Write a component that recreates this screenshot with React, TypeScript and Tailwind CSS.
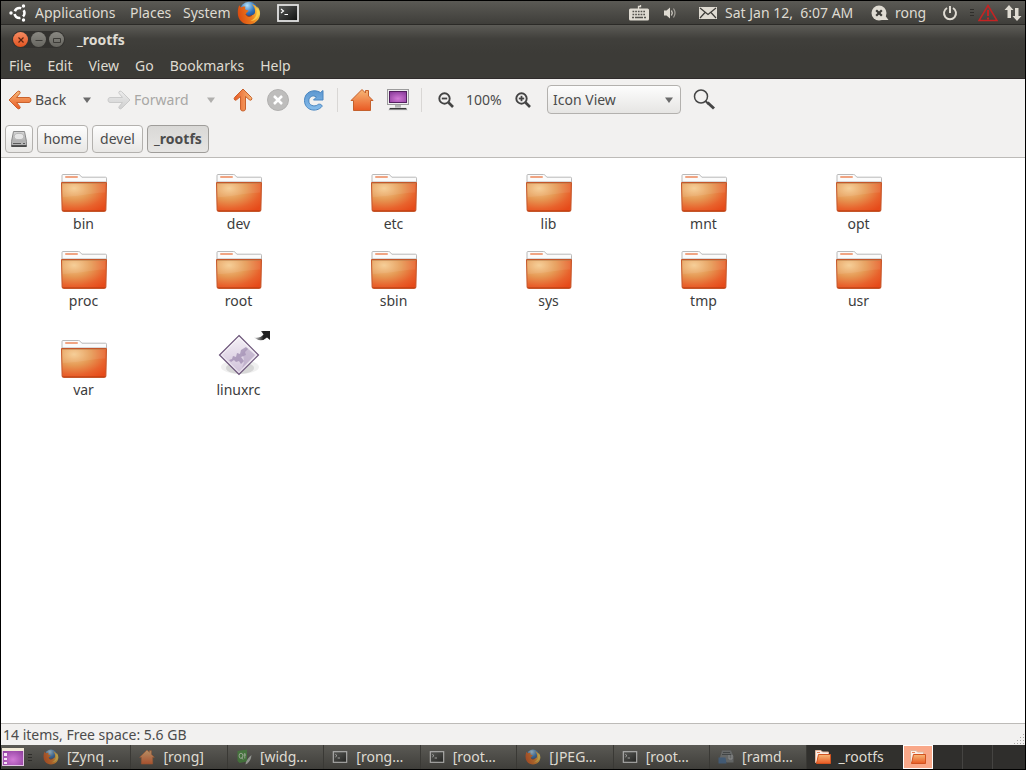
import type { ReactNode } from "react";
import clsx from "clsx";

const FOLDERS = ["bin", "dev", "etc", "lib", "mnt", "opt", "proc", "root", "sbin", "sys", "tmp", "usr", "var"];

const MENUS = ["File", "Edit", "View", "Go", "Bookmarks", "Help"];

const TASKS: { title: string; icon: ReactNode; active?: boolean }[] = [
  { title: "[Zynq …", icon: <FirefoxIcon className="size-4" /> },
  { title: "[rong]", icon: <HomeIcon className="size-4" /> },
  { title: "[widg…", icon: <QtIcon /> },
  { title: "[rong…", icon: <TerminalIcon className="h-3 w-4" /> },
  { title: "[root…", icon: <TerminalIcon className="h-3 w-4" /> },
  { title: "[JPEG…", icon: <FirefoxIcon className="size-4" /> },
  { title: "[root…", icon: <TerminalIcon className="h-3 w-4" /> },
  { title: "[ramd…", icon: <ArchiveIcon /> },
  { title: "_rootfs", icon: <SmallFolderIcon />, active: true },
];

// Gradients shared by every icon on the page
function IconDefs() {
  return (
    <svg className="absolute size-0" aria-hidden="true">
      <defs>
        <radialGradient id="folder" cx="0.28" cy="0.2" r="0.95">
          <stop offset="0" stopColor="#f5cb90" />
          <stop offset="0.4" stopColor="#e69a55" />
          <stop offset="0.75" stopColor="#e8622c" />
          <stop offset="1" stopColor="#e64a19" />
        </radialGradient>
        <linearGradient id="orange" x1="0" y1="0" x2="0" y2="1">
          <stop offset="0" stopColor="#f7b877" />
          <stop offset="1" stopColor="#e95a24" />
        </linearGradient>
        <linearGradient id="gray" x1="0" y1="0" x2="0" y2="1">
          <stop offset="0" stopColor="#ececec" />
          <stop offset="1" stopColor="#cfcfcf" />
        </linearGradient>
        <linearGradient id="blue" x1="0" y1="0" x2="0" y2="1">
          <stop offset="0" stopColor="#5d97d0" />
          <stop offset="1" stopColor="#86bdec" />
        </linearGradient>
        <radialGradient id="purple" cx="0.5" cy="0.65" r="0.7">
          <stop offset="0" stopColor="#d27ad6" />
          <stop offset="1" stopColor="#8c3d9c" />
        </radialGradient>
        <radialGradient id="globe" cx="0.4" cy="0.2" r="0.8">
          <stop offset="0" stopColor="#b4e0f8" />
          <stop offset="0.5" stopColor="#2f74bd" />
          <stop offset="1" stopColor="#12306b" />
        </radialGradient>
        <linearGradient id="fox" x1="0" y1="0.6" x2="1" y2="0.4">
          <stop offset="0" stopColor="#d9480f" />
          <stop offset="0.6" stopColor="#ec7d1d" />
          <stop offset="1" stopColor="#f9cf45" />
        </linearGradient>
        <linearGradient id="screen" x1="0" y1="0" x2="1" y2="1">
          <stop offset="0" stopColor="#5c5e5c" />
          <stop offset="1" stopColor="#0c0d0c" />
        </linearGradient>
        <linearGradient id="diamond" x1="0" y1="0" x2="0" y2="1">
          <stop offset="0" stopColor="#f5f1f7" />
          <stop offset="1" stopColor="#cfc0d8" />
        </linearGradient>
        <linearGradient id="emblem" x1="0" y1="0" x2="1" y2="0">
          <stop offset="0" stopColor="#dddddd" />
          <stop offset="0.6" stopColor="#222222" />
        </linearGradient>
        <linearGradient id="drive" x1="0" y1="0" x2="0" y2="1">
          <stop offset="0" stopColor="#d6d6d6" />
          <stop offset="1" stopColor="#9a9a9a" />
        </linearGradient>
      </defs>
    </svg>
  );
}

function UbuntuIcon() {
  return (
    <svg viewBox="0 0 18 18" className="size-[18px]" fill="none" aria-hidden="true">
      <circle cx="10.500" cy="9" r="5" stroke="#fff" strokeWidth="2.600" strokeDasharray="7.600 2.870" strokeDashoffset="3.800" />
      <circle cx="2" cy="9" r="1.700" fill="#fff" />
      <circle cx="14.500" cy="2" r="1.700" fill="#fff" />
      <circle cx="14.500" cy="16" r="1.700" fill="#fff" />
    </svg>
  );
}

function FirefoxIcon({ className }: { className: string }) {
  return (
    <svg viewBox="0 0 24 24" className={className} aria-hidden="true">
      <circle cx="12" cy="10" r="9.300" fill="url(#globe)" />
      <path
        d="M2.300 4.300 4 6.500C5.500 5.300 7 5.200 8.600 5.800 7.800 7 8 8 8.600 8.700l3 .8c-.4 1.700-2.400 1.800-2.800 3.600.8 2.500 4 3 6.200 1.200 1.800-.6 3-1.700 3-3.400.4-3-1-5.500-3-8 3.500 1.100 5.500 3.600 6.200 6 .2-.9 0-1.700-.3-2.700 1.700 2.200 2.400 4.700 2.100 7.400C22.500 19.200 17.800 23.300 12 23.300 5.500 23.300.8 18.400.8 12c0-2.800.3-5.200 1.500-7.700Z"
        fill="url(#fox)"
      />
      <path d="M18 6c3 4 2.500 11-4.500 14 7.500-.5 11-8 7-14.500L20 8Z" fill="#fbd650" opacity="0.800" />
      <path d="M8.800 13.100c.8 2.500 4 3 6.200 1.200" fill="none" stroke="#a5320c" strokeWidth="0.800" />
    </svg>
  );
}

function TerminalIcon({ className }: { className: string }) {
  return (
    <svg viewBox="0 0 22 18" className={className} aria-hidden="true">
      <rect x="1" y="1" width="20" height="16" fill="url(#screen)" stroke="#e3e3e3" strokeWidth="1.800" />
      <path d="m4 5 2.500 2L4 9M7.500 10.500H11" fill="none" stroke="#fff" strokeWidth="1.200" />
    </svg>
  );
}

function KeyboardIcon() {
  return (
    <svg viewBox="0 0 20 16" className="h-4 w-5" aria-hidden="true">
      <path d="M9.500 4V1.500h2V0" fill="none" stroke="#dfdbd2" strokeWidth="1.300" />
      <rect y="3.500" width="20" height="12" rx="1.500" fill="#dfdbd2" />
      <path d="M3.500 6.500h13.500M3.500 9.500h13.500" stroke="#55544f" strokeWidth="1.600" strokeDasharray="1.700 1" />
      <path d="M3 12.500h2m1 0h8m1 0h2" stroke="#55544f" strokeWidth="1.500" />
    </svg>
  );
}

function VolumeIcon() {
  return (
    <svg viewBox="0 0 14 14" className="size-[14px]" fill="none" aria-hidden="true">
      <path d="M1 4.500h2.500L7 1.500v11l-3.500-3H1Z" fill="#dfdbd2" />
      <path d="M8.500 4.500q1.500 2.500 0 5" stroke="#dfdbd2" strokeWidth="1.200" />
      <path d="M10.500 2.500q3 4.500 0 9" stroke="#a5a29b" strokeWidth="1.200" />
    </svg>
  );
}

function MailIcon() {
  return (
    <svg viewBox="0 0 18 12" className="h-3 w-[18px]" aria-hidden="true">
      <rect width="18" height="12" fill="#dfdbd2" />
      <path d="m1 1 8 6.500L17 1M1 11l5-5.500M17 11l-5-5.500" fill="none" stroke="#3c3b37" strokeWidth="1.200" />
    </svg>
  );
}

function ChatStatusIcon() {
  return (
    <svg viewBox="0 0 18 16" className="h-4 w-[18px]" aria-hidden="true">
      <circle cx="8" cy="8" r="7.500" fill="#dfdbd2" />
      <path d="m13 9 4.500 6H8Z" fill="#dfdbd2" />
      <path d="m5.200 5.200 5.600 5.600m0-5.600-5.600 5.600" stroke="#3c3b37" strokeWidth="2.200" />
    </svg>
  );
}

function PowerIcon() {
  return (
    <svg viewBox="0 0 16 16" className="size-4" fill="none" stroke="#dfdbd2" strokeWidth="2" aria-hidden="true">
      <path d="M5 3a6 6 0 1 0 6 0" />
      <path d="M8 1v7" />
    </svg>
  );
}

function WarningIcon() {
  return (
    <svg viewBox="0 0 20 18" className="h-[18px] w-5" fill="none" stroke="#c42323" aria-hidden="true">
      <path d="M10 1.500 19 16.500H1Z" strokeWidth="1.500" />
      <path d="M10 6v6m0 1.500v2" strokeWidth="2" />
    </svg>
  );
}

function NetworkIcon() {
  return (
    <svg viewBox="0 0 18 18" className="size-[18px]" fill="#dfdbd2" aria-hidden="true">
      <path d="M5 1 9.500 6H7v8H3.500V6H.5Z" />
      <path d="M13 17 8.500 12H11V4h3.500v8h3Z" />
    </svg>
  );
}

function ArrowIcon({ className, tone }: { className: string; tone: "orange" | "gray" }) {
  return (
    <svg viewBox="0 0 24 20" className={className} aria-hidden="true">
      <path
        d="M1 10 9.500 1.500q1.500-1 2.500.3.600 1-.4 2L8.500 7.500H21q2 .2 2 2.500t-2 2.500H8.500l3.100 3.700q1 1 .4 2-1 1.300-2.500.3Z"
        fill={tone === "orange" ? "url(#orange)" : "url(#gray)"}
        stroke={tone === "orange" ? "#c9622d" : "#cacaca"}
        strokeLinejoin="round"
      />
    </svg>
  );
}

function StopIcon() {
  return (
    <svg viewBox="0 0 22 22" className="size-[22px]" aria-hidden="true">
      <circle cx="11" cy="11" r="10.500" fill="#bebdbc" stroke="#b1b0af" />
      <path d="m7 7 8 8m0-8-8 8" stroke="#fff" strokeWidth="2.500" />
    </svg>
  );
}

function ReloadIcon() {
  return (
    <svg viewBox="0 0 22 22" className="size-[22px]" aria-hidden="true">
      <path
        d="M17.500 3.500 20 1.500v9.500h-9.500l3-3C9.500 5.500 5.800 7.800 5.800 12c0 4.500 5.500 6 8.700 4 .5-1.500 5-1 4.500 1.500C13.500 24 1.500 21.500 1.500 11.500c0-9 9.500-12 16-8Z"
        fill="url(#blue)"
        stroke="#4a86c0"
        strokeLinejoin="round"
      />
    </svg>
  );
}

function HomeIcon({ className }: { className: string }) {
  return (
    <svg viewBox="0 0 24 24" className={className} aria-hidden="true">
      <path
        d="M12 1.500 15.500 5V2.500h3V8l4.500 4.500h-2.500v10h-17v-10H1Z"
        fill="url(#orange)"
        stroke="#c4602c"
        strokeLinejoin="round"
      />
    </svg>
  );
}

function ComputerIcon() {
  return (
    <svg viewBox="0 0 24 24" className="size-6" aria-hidden="true">
      <rect x="1.500" y="1.500" width="21" height="15" fill="#ededed" stroke="#9c9c9c" />
      <rect x="3.500" y="3.500" width="17" height="11" fill="url(#purple)" stroke="#54205f" />
      <path d="M9 17h6v3H9Z" fill="#b5b5b5" />
      <path d="M4 19.500h16l2 3H2Z" fill="#dcdcdc" />
      <path d="M4 20h16l1 1.500H3Z" fill="#3a3a3a" />
    </svg>
  );
}

function ZoomIcon({ plus }: { plus?: boolean }) {
  return (
    <svg viewBox="0 0 16 16" className="size-4" fill="none" stroke="#444" aria-hidden="true">
      <circle cx="6.500" cy="6.500" r="5.200" strokeWidth="1.900" />
      <path d="m10.500 10.500 4.500 4.500" strokeWidth="2.600" />
      <path d="M3.800 6.500h5.400" strokeWidth="1.800" />
      {plus && <path d="M6.500 3.800v5.400" strokeWidth="1.800" />}
    </svg>
  );
}

function SearchIcon() {
  return (
    <svg viewBox="0 0 22 22" className="size-[22px]" fill="none" stroke="#454545" aria-hidden="true">
      <circle cx="8" cy="7.500" r="6.500" strokeWidth="1.500" />
      <path d="m12.500 12 3 3" strokeWidth="1.800" />
      <path d="m14.500 13.500 6.500 6" strokeWidth="3" />
    </svg>
  );
}

function Caret({ className }: { className: string }) {
  return (
    <svg viewBox="0 0 8 6" className={clsx("h-[6px] w-2", className)} fill="currentColor" aria-hidden="true">
      <path d="M0 .5h8L4 6Z" />
    </svg>
  );
}

function DriveIcon() {
  return (
    <svg viewBox="0 0 18 18" className="size-[18px]" aria-hidden="true">
      <path d="M3.500 1.500h11l2 10v5h-15v-5Z" fill="url(#drive)" stroke="#8a8a8a" />
      <ellipse cx="9" cy="6.500" rx="4.800" ry="3.200" fill="#e6e6e6" stroke="#b5b5b5" />
      <path d="M2 11.500h14v4.500H2Z" fill="#b5b5b5" />
      <path d="M3 13.500h8M13 13.500h2" stroke="#5a5a5a" />
      <path d="M1.500 16h15" stroke="#333" strokeWidth="1.500" />
    </svg>
  );
}

function FolderIcon() {
  return (
    <svg viewBox="0 0 48 40" className="h-10 w-12" aria-hidden="true">
      <path d="M2 9V2.500Q2 1.500 3 1.500h15.500q1 0 1.700.8l1.600 1.900h23.700q1 0 1 1V9Z" fill="#fbfbfb" stroke="#b9b9b9" />
      <rect x="5" y="3" width="13" height="2" rx="1" fill="#f0a482" />
      <path d="M1.500 9.500h45l-.6 27.500q-.1 1.500-1.600 1.500H3.700q-1.500 0-1.600-1.500Z" fill="url(#folder)" stroke="#c4562a" />
      <path d="M2.500 10.500h43l-.2 9C30 20 15 24 2.700 24Z" fill="#fff" opacity="0.080" />
      <path d="M2 10.500h44" stroke="#b98453" opacity="0.500" />
      <path d="M2.500 37.500h43" stroke="#b53a10" opacity="0.500" />
    </svg>
  );
}

function SmallFolderIcon() {
  return (
    <svg viewBox="0 0 16 16" className="size-4" aria-hidden="true">
      <path d="M.5 13.500v-12H6l1.500 1.500h6v10.500Z" fill="#fbeee6" stroke="#e0b49c" />
      <path d="M2 3.500h3" stroke="#e8865a" />
      <path d="M3.500 5.500h12v9H1.500Z" fill="url(#orange)" stroke="#d2521f" />
    </svg>
  );
}

function QtIcon() {
  return (
    <svg viewBox="0 0 16 16" className="size-4" aria-hidden="true">
      <path d="M1.500 2 11 .5v12L3.500 14l-2-2Z" fill="#3f8a35" />
      <ellipse cx="5" cy="6.800" rx="1.900" ry="2.600" fill="none" stroke="#c9dfc2" />
      <path d="m5.500 8.500 1.500 2M8.800 4v5.500M7.500 6h2.500" stroke="#c9dfc2" fill="none" />
      <path d="M15.500 6q-.5 7-6 9.500.5-5 6-9.500Z" fill="#c3c8c2" />
    </svg>
  );
}

function ArchiveIcon() {
  return (
    <svg viewBox="0 0 16 16" className="size-4" aria-hidden="true">
      <path d="M4 1.500h9l2.500 6v6H9L1.500 10Z" fill="#75797c" />
      <path d="M5 3.500h7M4 5.500h9" stroke="#3c4145" />
      <path d="M.5 8.500h7l1 6h-8Z" fill="#3f6795" />
      <path d="M11 6v4h3V6" fill="none" stroke="#b5b8ba" />
    </svg>
  );
}

function LinkedProgramIcon() {
  return (
    <span className="relative block h-[52px] w-12">
      <svg viewBox="0 0 48 52" className="h-[52px] w-12" aria-hidden="true">
        <ellipse cx="25" cy="40" rx="19" ry="7" fill="#000" opacity="0.060" />
        <ellipse cx="25" cy="41" rx="14" ry="6" fill="#000" opacity="0.100" />
        <path d="M24 8.500 43.500 28 24 47.500 4.500 28Z" fill="url(#diamond)" stroke="#6b5478" strokeWidth="1.200" />
        <path
          d="m14 33 3-1 1-3 3 1 1-4 3 1 1-4 5-3 2 2-3 3 1 3-5 2 3 4-3 3-2-3-3 1-2-2-3 2Z"
          fill="#9a86ad"
          opacity="0.700"
        />
        <path d="m32 21 8 7-13 13q4-8 0-14Z" fill="#a998b9" opacity="0.500" />
        <path d="M24 10.500 41.500 28 24 45.500 6.500 28Z" fill="none" stroke="#fff" opacity="0.700" />
      </svg>
      <svg viewBox="0 0 18 12" className="absolute -right-[8px] top-[3px] h-3 w-[18px]" aria-hidden="true">
        <path d="M8 1h9v9l-3-2.500Q8 13 1 7.500q6 1 9.500-3Z" fill="url(#emblem)" />
      </svg>
    </span>
  );
}

function ShowDesktopIcon() {
  return (
    <svg viewBox="0 0 22 18" className="h-[18px] w-[22px]" aria-hidden="true">
      <rect x="0.500" y="0.500" width="21" height="17" fill="url(#purple)" stroke="#e3c4e6" />
      <rect width="22" height="3" fill="#f1ead8" />
      <path d="M2 5h3v3H2Zm0 5h3v2H2Zm0 4h3v2H2Z" fill="#f6e5f6" />
    </svg>
  );
}

function Handle() {
  return (
    <span className="flex flex-col gap-[2px]" aria-hidden="true">
      <i className="h-px w-1 bg-[#2f2e2b]" />
      <i className="h-px w-1 bg-[#2f2e2b]" />
      <i className="h-px w-1 bg-[#2f2e2b]" />
    </span>
  );
}

function TopPanel() {
  return (
    <header className="flex h-6 items-center justify-between border-b border-[#2b2a27] bg-linear-to-b from-[#5b5a55] to-[#3f3e3a] text-[#dfdbd2]">
      <nav className="flex items-center pl-2">
        <UbuntuIcon />
        <button className="ml-2 w-[84px] text-left">Applications</button>
        <button className="ml-[11px] w-[42px] text-left">Places</button>
        <button className="ml-[11px] w-[54px] text-left">System</button>
        <button aria-label="Firefox">
          <FirefoxIcon className="size-6" />
        </button>
        <button className="ml-4" aria-label="Terminal">
          <TerminalIcon className="h-[18px] w-[22px]" />
        </button>
      </nav>
      <div className="flex items-center pr-[3px]">
        <KeyboardIcon />
        <span className="ml-[14px]">
          <VolumeIcon />
        </span>
        <span className="ml-[22px]">
          <MailIcon />
        </span>
        <button className="ml-2 w-[132px] text-left whitespace-nowrap">Sat Jan 12, &nbsp;6:07 AM</button>
        <span className="ml-[14px]">
          <ChatStatusIcon />
        </span>
        <button className="ml-[6px] w-8 text-left">rong</button>
        <button className="ml-[15px]" aria-label="Shut down">
          <PowerIcon />
        </button>
        <span className="ml-3">
          <Handle />
        </span>
        <span className="ml-1">
          <WarningIcon />
        </span>
        <span className="ml-[6px]">
          <NetworkIcon />
        </span>
      </div>
    </header>
  );
}

function TitleBar() {
  const base = "flex size-[15px] items-center justify-center rounded-full";
  const dim = "bg-linear-to-b from-[#8a8983] to-[#66655f]";
  return (
    <div className="flex h-7 items-center gap-3 bg-linear-to-b from-[#5d5c57] via-[#403f3b] to-[#3c3b37] pt-px pl-[11px]">
      <div className="flex gap-[3px] rounded-full bg-[#33322f] p-px">
        <button aria-label="Close" className={clsx(base, "bg-linear-to-b from-[#f58a60] to-[#e2531c]")}>
          <svg viewBox="0 0 8 8" className="size-2" stroke="#5a2410" strokeWidth="1.200">
            <path d="m1.500 1.500 5 5m0-5-5 5" />
          </svg>
        </button>
        <button aria-label="Minimize" className={clsx(base, dim)}>
          <svg viewBox="0 0 8 8" className="size-2" stroke="#3c3b37">
            <path d="M.5 4.500h7" />
          </svg>
        </button>
        <button aria-label="Maximize" className={clsx(base, dim)}>
          <svg viewBox="0 0 8 8" className="size-2" stroke="#3c3b37" fill="none">
            <path d="M.5 2.500h7v4h-7Z" />
          </svg>
        </button>
      </div>
      <h1 className="font-bold text-[#dfdbd2]">_rootfs</h1>
    </div>
  );
}

function Toolbar() {
  return (
    <div className="flex h-[41px] items-center pl-[7px] text-[#4c4c4c]">
      <button className="flex w-[61px] items-center gap-[3px]">
        <ArrowIcon className="h-5 w-6 shrink-0" tone="orange" />
        Back
      </button>
      <button className="ml-[14px]" aria-label="Back history">
        <Caret className="text-[#6b6b6b]" />
      </button>
      <button className="ml-4 flex w-[84px] items-center gap-[3px] text-[#a8a7a5]" disabled>
        <ArrowIcon className="h-5 w-6 shrink-0 -scale-x-100" tone="gray" />
        Forward
      </button>
      <button className="ml-4" aria-label="Forward history" disabled>
        <Caret className="text-[#b0afad]" />
      </button>
      <button className="ml-4" aria-label="Up">
        <ArrowIcon className="h-5 w-6 rotate-90" tone="orange" />
      </button>
      <button className="ml-3" aria-label="Stop" disabled>
        <StopIcon />
      </button>
      <button className="ml-[14px]" aria-label="Reload">
        <ReloadIcon />
      </button>
      <span className="ml-3 h-6 w-px bg-[#d9d7d5]" />
      <button className="ml-3" aria-label="Home">
        <HomeIcon className="size-6" />
      </button>
      <button className="ml-3" aria-label="Computer">
        <ComputerIcon />
      </button>
      <span className="ml-[11px] h-6 w-px bg-[#d9d7d5]" />
      <button className="ml-4" aria-label="Zoom out">
        <ZoomIcon />
      </button>
      <button className="ml-3 w-[37px] text-left">100%</button>
      <button className="ml-3" aria-label="Zoom in">
        <ZoomIcon plus />
      </button>
      <div className="relative ml-4 h-[29px] w-[134px]">
        <select
          aria-label="View mode"
          className="size-full appearance-none rounded border border-[#b3b1ae] bg-linear-to-b from-[#fdfdfd] to-[#e6e5e3] pl-[5px]"
        >
          <option>Icon View</option>
          <option>List View</option>
          <option>Compact View</option>
        </select>
        <Caret className="pointer-events-none absolute right-2 top-3 text-[#6b6b6b]" />
      </div>
      <button className="ml-3" aria-label="Search">
        <SearchIcon />
      </button>
    </div>
  );
}

function PathBar() {
  const base = "flex h-7 items-center justify-center rounded border text-[#4c4c4c]";
  const raised = "border-[#b3b1ae] bg-linear-to-b from-[#fdfdfd] to-[#e8e7e5]";
  return (
    <nav className="flex h-[37px] items-center gap-1 px-1">
      <button aria-label="File System" className={clsx(base, raised, "w-7")}>
        <DriveIcon />
      </button>
      <button className={clsx(base, raised, "w-[51px]")}>home</button>
      <button className={clsx(base, raised, "w-[51px]")}>devel</button>
      <button className={clsx(base, "w-[62px] border-[#9f9d9a] bg-linear-to-b from-[#d9d8d6] to-[#e6e5e3] font-bold")}>
        _rootfs
      </button>
    </nav>
  );
}

function FileItem({ name, children }: { name: string; children: ReactNode }) {
  return (
    <button className="flex flex-col items-center gap-px text-[#3c3c3c]">
      {children}
      <span>{name}</span>
    </button>
  );
}

function TaskBar() {
  return (
    <footer className="flex h-6 items-center bg-linear-to-b from-[#5b5a55] to-[#3f3e3a] text-[#dfdbd2]">
      <button className="ml-px" aria-label="Show desktop">
        <ShowDesktopIcon />
      </button>
      <span className="ml-1 mr-[3px]">
        <Handle />
      </span>
      <div className="flex h-full flex-1">
        {TASKS.map((task, i) => (
          <button
            key={i}
            className={clsx(
              "flex h-full min-w-0 flex-1 items-center gap-2 pl-2 whitespace-nowrap",
              task.active ? "bg-[#31302d]" : "border-r border-[#3a3935]"
            )}
          >
            <span className={clsx("shrink-0", !task.active && "opacity-60")}>{task.icon}</span>
            {task.title}
          </button>
        ))}
      </div>
      <div className="flex h-full w-[123px] bg-[#2f2e2c]">
        <button
          aria-label="Workspace 1"
          className="ml-px flex w-[30px] items-center justify-center border border-white bg-[#f9a889]"
        >
          <SmallFolderIcon />
        </button>
        <button aria-label="Workspace 2" className="w-[30px] border-r border-[#454442]" />
        <button aria-label="Workspace 3" className="w-[30px] border-r border-[#454442]" />
        <button aria-label="Workspace 4" className="w-[30px]" />
      </div>
    </footer>
  );
}

export default function App() {
  return (
    <div className="flex min-h-screen flex-col border border-black bg-[#f2f1f0] font-['Noto_Sans',sans-serif] text-[14px] leading-5">
      <IconDefs />
      <TopPanel />
      <TitleBar />
      <nav className="flex h-[26px] items-center gap-4 border-b border-[#2f2b2b] bg-[#3c3b37] pt-px pl-2 text-[#dfdbd2]">
        {MENUS.map((menu) => (
          <button key={menu}>{menu}</button>
        ))}
      </nav>
      <Toolbar />
      <PathBar />
      <main className="flex-1 border-y border-[#bdbbb8] bg-white pt-[15px] pl-[5px]">
        <div className="grid grid-cols-[repeat(auto-fill,155px)] items-end gap-y-4">
          {FOLDERS.map((name) => (
            <FileItem key={name} name={name}>
              <FolderIcon />
            </FileItem>
          ))}
          <FileItem name="linuxrc">
            <LinkedProgramIcon />
          </FileItem>
        </div>
      </main>
      <div className="flex h-[21px] items-end justify-between pl-[2px] text-[#4c4c4c]">
        <p>14 items, Free space: 5.6 GB</p>
        <svg viewBox="0 0 11 11" className="size-[11px]" fill="#aaa8a5" aria-hidden="true">
          <path d="M9 0h1v1H9ZM6 3h1v1H6Zm3 0h1v1H9ZM3 6h1v1H3Zm3 0h1v1H6Zm3 0h1v1H9ZM0 9h1v1H0Zm3 0h1v1H3Zm3 0h1v1H6Zm3 0h1v1H9Z" />
        </svg>
      </div>
      <TaskBar />
    </div>
  );
}
